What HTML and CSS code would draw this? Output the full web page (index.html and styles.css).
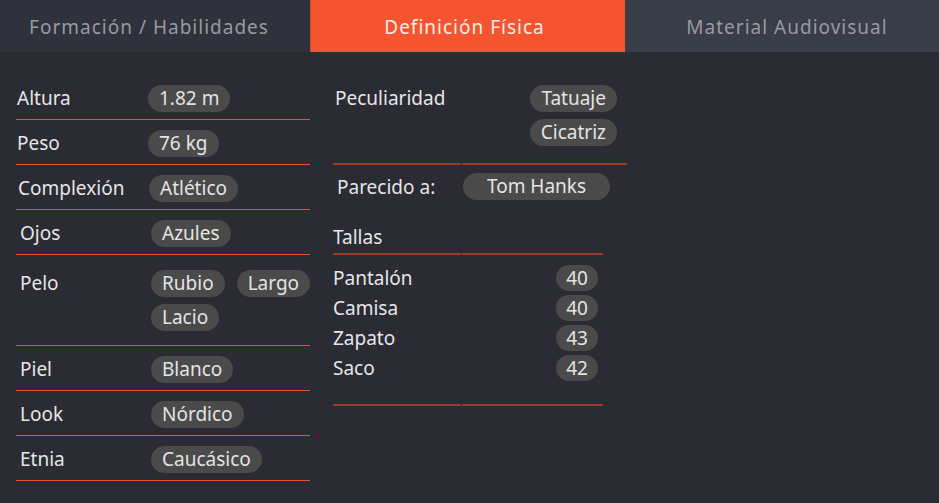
FILE: index.html
```html
<!DOCTYPE html>
<html lang="es">
<head>
<meta charset="utf-8">
<title>Definición Física</title>
<link rel="stylesheet" href="styles.css">
</head>
<body>
<nav class="tabs">
  <div class="tab tab-first">Formación / Habilidades</div>
  <div class="tab tab-active">Definición Física</div>
  <div class="tab tab-last">Material Audiovisual</div>
</nav>
<main class="content">
  <section class="left">
    <div class="row r-a"><span class="label">Altura</span><div class="pills"><span class="pill">1.82 m</span></div></div>
    <div class="row r-a"><span class="label">Peso</span><div class="pills"><span class="pill">76 kg</span></div></div>
    <div class="row r-b"><span class="label">Complexión</span><div class="pills"><span class="pill">Atlético</span></div></div>
    <div class="row r-c"><span class="label">Ojos</span><div class="pills"><span class="pill">Azules</span></div></div>
    <div class="row r-c row-tall"><span class="label">Pelo</span><div class="pills"><span class="pill">Rubio</span><span class="pill">Largo</span><span class="pill">Lacio</span></div></div>
    <div class="row r-c"><span class="label">Piel</span><div class="pills"><span class="pill">Blanco</span></div></div>
    <div class="row r-c"><span class="label">Look</span><div class="pills"><span class="pill">Nórdico</span></div></div>
    <div class="row r-c"><span class="label">Etnia</span><div class="pills"><span class="pill">Caucásico</span></div></div>
  </section>
  <section class="right">
    <div class="pec">
      <div class="pec-cell pec-label">Peculiaridad</div>
      <div class="pec-cell pec-pills"><span class="pill">Tatuaje</span><span class="pill">Cicatriz</span></div>
    </div>
    <div class="parecido">
      <span class="par-label">Parecido a:</span>
      <span class="pill pill-wide">Tom Hanks</span>
    </div>
    <div class="tallas">
      <div class="t-head">Tallas</div>
      <div class="t-head"></div>
      <div class="t-body t-names">
        <span>Pantalón</span><span>Camisa</span><span>Zapato</span><span>Saco</span>
      </div>
      <div class="t-body t-values">
        <span class="pill pill-num">40</span><span class="pill pill-num">40</span><span class="pill pill-num">43</span><span class="pill pill-num">42</span>
      </div>
    </div>
  </section>
</main>
</body>
</html>
```
FILE: styles.css
```css
* { box-sizing: border-box; }
html, body {
  margin: 0;
  padding: 0;
  background: #2a2b33;
  height: 100%;
}
body {
  font-family: "Noto Sans", "Open Sans", sans-serif;
  font-size: 19px;
  color: #e6e6e8;
  width: 939px;
  height: 503px;
  overflow: hidden;
}
.tabs {
  display: flex;
  height: 52px;
}
.tab {
  display: flex;
  align-items: center;
  justify-content: center;
  font-size: 19px;
  letter-spacing: 1px;
  color: #989aa2;
  padding-top: 2px;
}
.tab-first { width: 310px; background: #2f323b; padding-right: 12px; }
.tab-active {
  width: 315px;
  background: #f45530;
  color: #f7ece8;
  border-left: 1px solid #c84a2c;
  padding-right: 7px;
}
.tab-last { flex: 1; background: #393d48; padding-left: 10px; }

.content {
  display: flex;
  padding: 23px 0 0 16px;
  gap: 23px;
}
.left { width: 294px; }
.row {
  display: flex;
  align-items: flex-start;
  padding: 10px 0 7px;
  border-bottom: 1px solid #e9512f;
}
.label {
  line-height: 27px;
  flex: none;
}
.r-a .label { width: 132px; padding-left: 1px; }
.r-b .label { width: 133px; padding-left: 2px; }
.r-c .label { width: 135px; padding-left: 4px; }
.row-tall { padding: 15px 0 14px; }
.pills {
  display: flex;
  flex-wrap: wrap;
  gap: 7px 12px;
  width: 176px;
  flex: none;
}
.pill {
  display: inline-block;
  height: 27px;
  line-height: 26px;
  padding: 0 11px;
  border-radius: 14px;
  background: #4a4a4a;
  color: #e4e4e4;
  white-space: nowrap;
}

.right { width: 294px; }
.pec {
  display: grid;
  grid-template-columns: 128px 165px;
  column-gap: 1px;
}
.pec-cell { border-bottom: 2px solid #973d2b; }
.pec-label { padding: 10px 0 0 2px; line-height: 27px; }
.pec-pills {
  display: flex;
  flex-direction: column;
  align-items: flex-end;
  gap: 7px;
  padding: 10px 10px 17px 0;
}
.parecido {
  display: flex;
  align-items: center;
  padding: 8px 0 0 4px;
}
.par-label { width: 126px; }
.pill-wide { width: 147px; text-align: center; }

.tallas {
  width: 270px;
  display: grid;
  grid-template-columns: 128px 141px;
  column-gap: 1px;
  margin-top: 24px;
}
.t-head {
  line-height: 26px;
  padding-bottom: 3px;
  border-bottom: 2px solid #973d2b;
}
.t-body {
  display: flex;
  flex-direction: column;
  gap: 4px;
  padding: 10px 0 23px;
  border-bottom: 2px solid #973d2b;
}
.t-names span { line-height: 26px; height: 26px; }
.t-values { align-items: flex-end; padding-right: 5px; }
.pill-num { height: 26px; line-height: 26px; padding: 0 10px; }
```
